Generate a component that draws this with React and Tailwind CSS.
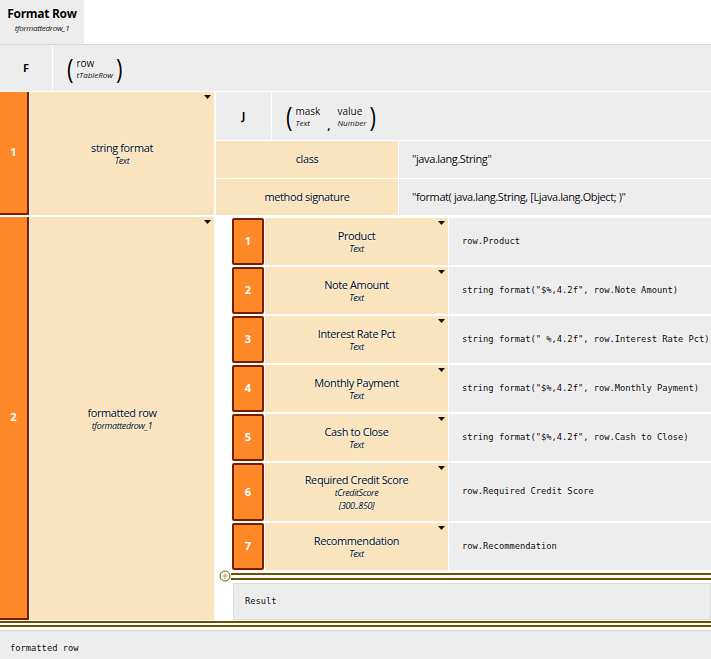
import React from "react";

const halo = "[text-shadow:0_0_2px_#fff,0_0_2px_#fff,0_0_1px_#fff]";
const sans = "font-['Open_Sans','Noto_Sans',sans-serif]";
const mono = "font-['DejaVu_Sans_Mono','Liberation_Mono',monospace]";

const Caret = ({ className = "" }) => (
  <svg width="7" height="4" viewBox="0 0 7 4" className={`absolute ${className}`}>
    <path d="M0 0h7L3.5 4z" fill="#111" />
  </svg>
);

const Paren = ({ side }) => (
  <span className={`${sans} text-[22px] leading-none text-black ${halo} scale-y-125 inline-block`}>
    {side === "l" ? "(" : ")"}
  </span>
);

const Label = ({ name, type, extra }) => (
  <div className={`flex flex-col items-center ${sans} ${halo} text-black`}>
    <span className="text-[11px] leading-[14px] tracking-[-0.4px]">{name}</span>
    <span className="text-[9px] leading-[11px] italic tracking-[-0.4px]">{type}</span>
    {extra && <span className="text-[9px] leading-[13px] italic tracking-[-0.4px] pt-px">{extra}</span>}
  </div>
);

const fields = [
  ["Product", "Text", null, "row.Product", 47],
  ["Note Amount", "Text", null, 'string format("$%,4.2f", row.Note Amount)', 47],
  ["Interest Rate Pct", "Text", null, 'string format(" %,4.2f", row.Interest Rate Pct)', 47],
  ["Monthly Payment", "Text", null, 'string format("$%,4.2f", row.Monthly Payment)', 47],
  ["Cash to Close", "Text", null, 'string format("$%,4.2f", row.Cash to Close)', 47],
  ["Required Credit Score", "tCreditScore", "[300..850]", "row.Required Credit Score", 58],
  ["Recommendation", "Text", null, "row.Recommendation", 47],
];

export default function App() {
  return (
    <div className="w-[711px] h-[659px] bg-white flex flex-col overflow-hidden">
      {/* tab */}
      <div className="h-[45px] flex shrink-0 border-b border-[#d6d6d6]">
        <div className={`w-[84px] bg-[#ededed] flex flex-col items-center justify-center pb-[6px] ${sans} ${halo}`}>
          <span className="text-[12px] font-bold leading-[16px] tracking-[-0.3px]">Format Row</span>
          <span className="text-[8px] italic leading-[11px] tracking-[-0.3px]">tformattedrow_1</span>
        </div>
        <div className="flex-1 bg-white" />
      </div>

      {/* header */}
      <div className="h-[47px] flex shrink-0 bg-[#ededed] border-b border-white">
        <div className={`w-[53px] shrink-0 border-r border-white flex items-center justify-center ${sans} ${halo} text-[11px] font-bold`}>F</div>
        <div className="flex-1 flex items-center pl-[14px] gap-[3px]">
          <Paren side="l" />
          <div className={`flex flex-col ${sans} ${halo}`}>
            <span className="text-[10px] leading-[12px]">row</span>
            <span className="text-[8px] leading-[11px] italic">tTableRow</span>
          </div>
          <Paren side="r" />
        </div>
      </div>

      {/* row 1 */}
      <div className="h-[125px] flex shrink-0 border-b-2 border-white">
        <div className={`w-[29px] shrink-0 bg-[#fd8828] border-r-2 border-b-2 border-[#7a1c00] flex items-center justify-center text-white text-[11px] font-bold ${sans}`}>1</div>
        <div className="w-[184px] shrink-0 ml-px bg-[#f9e4bd] relative flex items-center justify-center">
          <Caret className="top-[3px] right-[3px]" />
          <Label name="string format" type="Text" />
        </div>
        <div className="flex-1 min-w-0 ml-[2px] flex flex-col">
          <div className="h-[49px] shrink-0 flex bg-[#ededed] border-b border-white">
            <div className={`w-[56px] border-r border-white flex items-center justify-center ${sans} ${halo} text-[11px] font-bold`}>J</div>
            <div className="flex-1 flex items-center pl-[14px] gap-[3px]">
              <Paren side="l" />
              <div className={`flex flex-col ${sans} ${halo}`}>
                <span className="text-[10px] leading-[12px]">mask</span>
                <span className="text-[8px] leading-[11px] italic">Text</span>
              </div>
              <span className={`${sans} ${halo} text-[11px] font-bold self-end mb-[6px] mx-[4px]`}>,</span>
              <div className={`flex flex-col ${sans} ${halo}`}>
                <span className="text-[10px] leading-[12px]">value</span>
                <span className="text-[8px] leading-[11px] italic">Number</span>
              </div>
              <Paren side="r" />
            </div>
          </div>
          {[
            ["class", '"java.lang.String"'],
            ["method signature", '"format( java.lang.String, [Ljava.lang.Object; )"'],
          ].map(([k, v], i) => (
            <div key={k} className={`flex-1 flex ${i === 0 ? "border-b border-white" : ""}`}>
              <div className={`w-[182px] shrink-0 bg-[#f9e4bd] flex items-center justify-center ${sans} ${halo} text-[11px] tracking-[-0.4px]`}>{k}</div>
              <div className={`flex-1 ml-px bg-[#ededed] flex items-center pl-[13px] whitespace-nowrap ${sans} ${halo} text-[11px] tracking-[-0.4px]`}>{v}</div>
            </div>
          ))}
        </div>
      </div>

      {/* row 2 */}
      <div className="h-[403px] flex shrink-0">
        <div className={`w-[29px] shrink-0 bg-[#fd8828] border-r-2 border-b-2 border-[#7a1c00] flex items-center justify-center text-white text-[11px] font-bold ${sans}`}>2</div>
        <div className="w-[184px] shrink-0 ml-px bg-[#f9e4bd] relative flex items-center justify-center">
          <Caret className="top-[3px] right-[3px]" />
          <Label name="formatted row" type="tformattedrow_1" />
        </div>
        <div className="flex-1 min-w-0 ml-px bg-white flex flex-col pl-[17px] pt-px relative">
          {fields.map(([name, type, extra, val, h], i) => (
            <div key={name} className="flex shrink-0 mb-[2px]" style={{ height: h }}>
              <div className={`w-[32px] shrink-0 bg-[#fd8828] border-2 border-[#7a1c00] rounded-[2px] flex items-center justify-center text-white text-[11px] font-bold ${sans}`}>{i + 1}</div>
              <div className="w-[183px] shrink-0 ml-px bg-[#f9e4bd] relative flex items-center justify-center">
                <Caret className="top-[3px] right-[3px]" />
                <Label name={name} type={type} extra={extra} />
              </div>
              <div className={`flex-1 min-w-0 ml-px bg-[#ededed] flex items-center pl-[13px] ${mono} ${halo} text-[8.75px] whitespace-nowrap overflow-hidden`}>{val}</div>
            </div>
          ))}
          <div className="mt-px h-[7px] shrink-0 border-y-2 border-[#6e5100] -ml-px relative">
            <svg width="12" height="12" viewBox="0 0 12 12" className="absolute -left-[12px] -top-[5px]">
              <circle cx="6" cy="6" r="5" fill="#fff" stroke="#7a5a10" strokeWidth="1" />
              <path d="M6 3v6M3 6h6" stroke="#b59a60" strokeWidth="1" />
            </svg>
          </div>
          <div className={`mt-[3px] ml-px h-[37px] shrink-0 bg-[#ededed] border border-[#dcdcdc] flex items-center pl-[11px] ${mono} ${halo} text-[8.75px]`}>Result</div>
        </div>
      </div>

      {/* footer */}
      <div className="mt-[1px] h-[6px] border-y-2 border-[#6e5100] shrink-0" />
      <div className="mt-[3px] flex-1 bg-[#ededed] border-t border-[#d4d4d4] flex items-center pl-[10px] pt-[8px]">
        <span className={`${mono} ${halo} text-[8.75px]`}>formatted row</span>
      </div>
    </div>
  );
}
